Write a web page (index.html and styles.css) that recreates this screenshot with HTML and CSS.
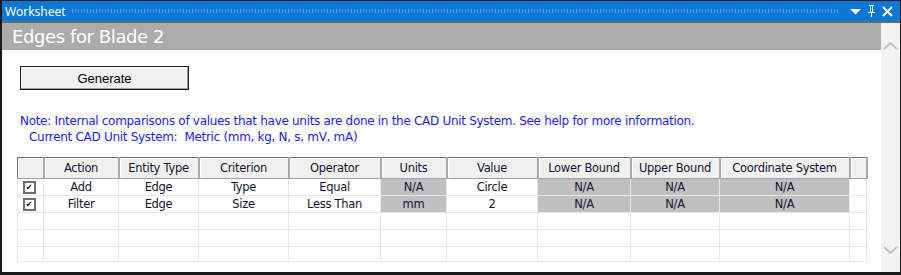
FILE: index.html
```html
<!DOCTYPE html>
<html lang="en">
<head>
    <meta charset="UTF-8">
    <meta name="viewport" content="width=device-width, initial-scale=1.0">
    <title>Worksheet</title>
    <link rel="stylesheet" href="styles.css">
</head>
<body>
    <div class="window">
        <div class="titlebar">
            <span class="title">Worksheet</span>
            <span class="grip"></span>
            <span class="tool">
                <svg width="11" height="7" viewBox="0 0 11 7"><path d="M0 1h11L5.5 6.5z" fill="#fff"/></svg>
            </span>
            <span class="tool">
                <svg width="9" height="12" viewBox="0 0 9 12"><path d="M2 0h5v1H6v6h2v1H5v4H4V8H1V7h2V1H2z" fill="#fff"/><path d="M4 1h1v6H4z" fill="#0a78d4"/></svg>
            </span>
            <span class="tool">
                <svg width="11" height="11" viewBox="0 0 11 11"><path d="M1 1l9 9M10 1l-9 9" stroke="#fff" stroke-width="2"/></svg>
            </span>
        </div>
        <div class="content">
            <div class="main">
                <div class="banner">Edges for Blade 2</div>
                <div class="body">
                    <button class="generate">Generate</button>
                    <p class="note">Note: Internal comparisons of values that have units are done in the CAD Unit System. See help for more information.</p>
                    <p class="note indent">Current CAD Unit System:&nbsp; Metric (mm, kg, N, s, mV, mA)</p>

                    <table class="grid">
                        <colgroup>
                            <col style="width: 26px">
                            <col style="width: 75px">
                            <col style="width: 80px">
                            <col style="width: 90px">
                            <col style="width: 92px">
                            <col style="width: 66px">
                            <col style="width: 91px">
                            <col style="width: 93px">
                            <col style="width: 89px">
                            <col style="width: 130px">
                            <col style="width: 17px">
                        </colgroup>
                        <thead>
                            <tr>
                                <th></th>
                                <th>Action</th>
                                <th>Entity Type</th>
                                <th>Criterion</th>
                                <th>Operator</th>
                                <th>Units</th>
                                <th>Value</th>
                                <th>Lower Bound</th>
                                <th>Upper Bound</th>
                                <th>Coordinate System</th>
                                <th></th>
                            </tr>
                        </thead>
                        <tbody>
                            <tr>
                                <td><span class="check">&#10004;</span></td>
                                <td>Add</td>
                                <td>Edge</td>
                                <td>Type</td>
                                <td>Equal</td>
                                <td class="na">N/A</td>
                                <td>Circle</td>
                                <td class="na">N/A</td>
                                <td class="na">N/A</td>
                                <td class="na">N/A</td>
                                <td></td>
                            </tr>
                            <tr>
                                <td><span class="check">&#10004;</span></td>
                                <td>Filter</td>
                                <td>Edge</td>
                                <td>Size</td>
                                <td>Less Than</td>
                                <td class="na">mm</td>
                                <td>2</td>
                                <td class="na">N/A</td>
                                <td class="na">N/A</td>
                                <td class="na">N/A</td>
                                <td></td>
                            </tr>
                            <tr class="empty"><td></td><td></td><td></td><td></td><td></td><td></td><td></td><td></td><td></td><td></td><td></td></tr>
                            <tr class="empty"><td></td><td></td><td></td><td></td><td></td><td></td><td></td><td></td><td></td><td></td><td></td></tr>
                            <tr class="empty last"><td></td><td></td><td></td><td></td><td></td><td></td><td></td><td></td><td></td><td></td><td></td></tr>
                        </tbody>
                    </table>
                </div>
            </div>
            <div class="scrollbar">
                <svg width="17" height="10" viewBox="0 0 17 10"><path d="M2 8l6.5-6 6.5 6" fill="none" stroke="#c2c2c2" stroke-width="2"/></svg>
                <svg width="17" height="10" viewBox="0 0 17 10"><path d="M2 2l6.5 6 6.5-6" fill="none" stroke="#c2c2c2" stroke-width="2"/></svg>
            </div>
        </div>
    </div>
</body>
</html>
```

FILE: styles.css
```css
body {
    margin: 0;
    padding: 0;
    background-color: #fff;
    font-family: "DejaVu Sans", Verdana, sans-serif;
}
.window {
    width: 901px;
    height: 275px;
    box-sizing: border-box;
    border: 1px solid #1a1a1a;
    border-left-width: 2px;
    border-bottom-width: 3px;
    display: flex;
    flex-direction: column;
    background-color: #fff;
}
.titlebar {
    height: 20px;
    background-color: #0a78d4;
    display: flex;
    align-items: center;
    padding: 0 5px 0 3px;
    border-bottom: 2px solid #6a6a6a;
}
.title {
    color: #fff;
    font-family: "Noto Sans", "Open Sans", sans-serif;
    font-size: 12px;
    margin-right: 5px;
}
.grip {
    flex: 1;
    height: 4px;
    margin-right: 8px;
    background-image: radial-gradient(circle, #4d9fe3 0.6px, transparent 0.9px);
    background-size: 3px 2px;
}
.tool {
    width: 16px;
    display: flex;
    justify-content: center;
    align-items: center;
}
.content {
    flex: 1;
    display: flex;
}
.main {
    flex: 1;
}
.banner {
    height: 27px;
    background-color: #ababab;
    color: #fff;
    font-size: 18px;
    line-height: 27px;
    padding-left: 10px;
    letter-spacing: -0.4px;
}
.body {
    padding: 16px 0 0 15px;
}
.generate {
    display: block;
    width: 169px;
    height: 24px;
    margin-left: 3px;
    background-color: #f0f0f0;
    border: 1px solid #1a1a1a;
    box-shadow: inset -1px -1px 0 #a0a0a0, inset 1px 1px 0 #fff;
    font-family: "Liberation Sans", Arial, sans-serif;
    font-size: 13px;
    color: #000;
    padding: 0;
}
.note {
    margin: 0 0 0 3px;
    color: #2222ee;
    font-size: 12px;
    line-height: 16px;
    letter-spacing: -0.3px;
}
.note:first-of-type {
    margin-top: 23px;
}
.indent {
    padding-left: 9px;
}
.grid {
    margin-top: 12px;
    border-collapse: collapse;
    table-layout: fixed;
    width: 849px;
    border: 1px solid #6e6e6e;
    font-size: 11.5px;
    letter-spacing: -0.3px;
    color: #141432;
}
.grid th {
    height: 20px;
    padding: 0;
    font-weight: normal;
    background-color: #f0f0f0;
    border-right: 2px solid #a8a8a8;
    border-bottom: 1px solid #a0a0a0;
    box-shadow: inset 1px 1px 0 #fff;
    text-align: center;
}
.grid td {
    height: 16px;
    padding: 0;
    text-align: center;
    border: 1px solid #e8e8e8;
    line-height: 14px;
}
.grid tr.last td {
    height: 14px;
}
.grid td.na {
    background-color: #c0c0c0;
    border-color: #e8e8e8;
}
.check {
    display: inline-block;
    width: 9px;
    height: 9px;
    line-height: 9px;
    font-size: 8px;
    border: 2px solid #6e6e6e;
    background-color: #fff;
    color: #000;
    text-align: center;
    vertical-align: middle;
    margin-left: -3px;
}
.scrollbar {
    width: 19px;
    background-color: #f3f3f3;
    display: flex;
    flex-direction: column;
    justify-content: space-between;
    align-items: center;
    padding: 18px 0 17px;
}
```
